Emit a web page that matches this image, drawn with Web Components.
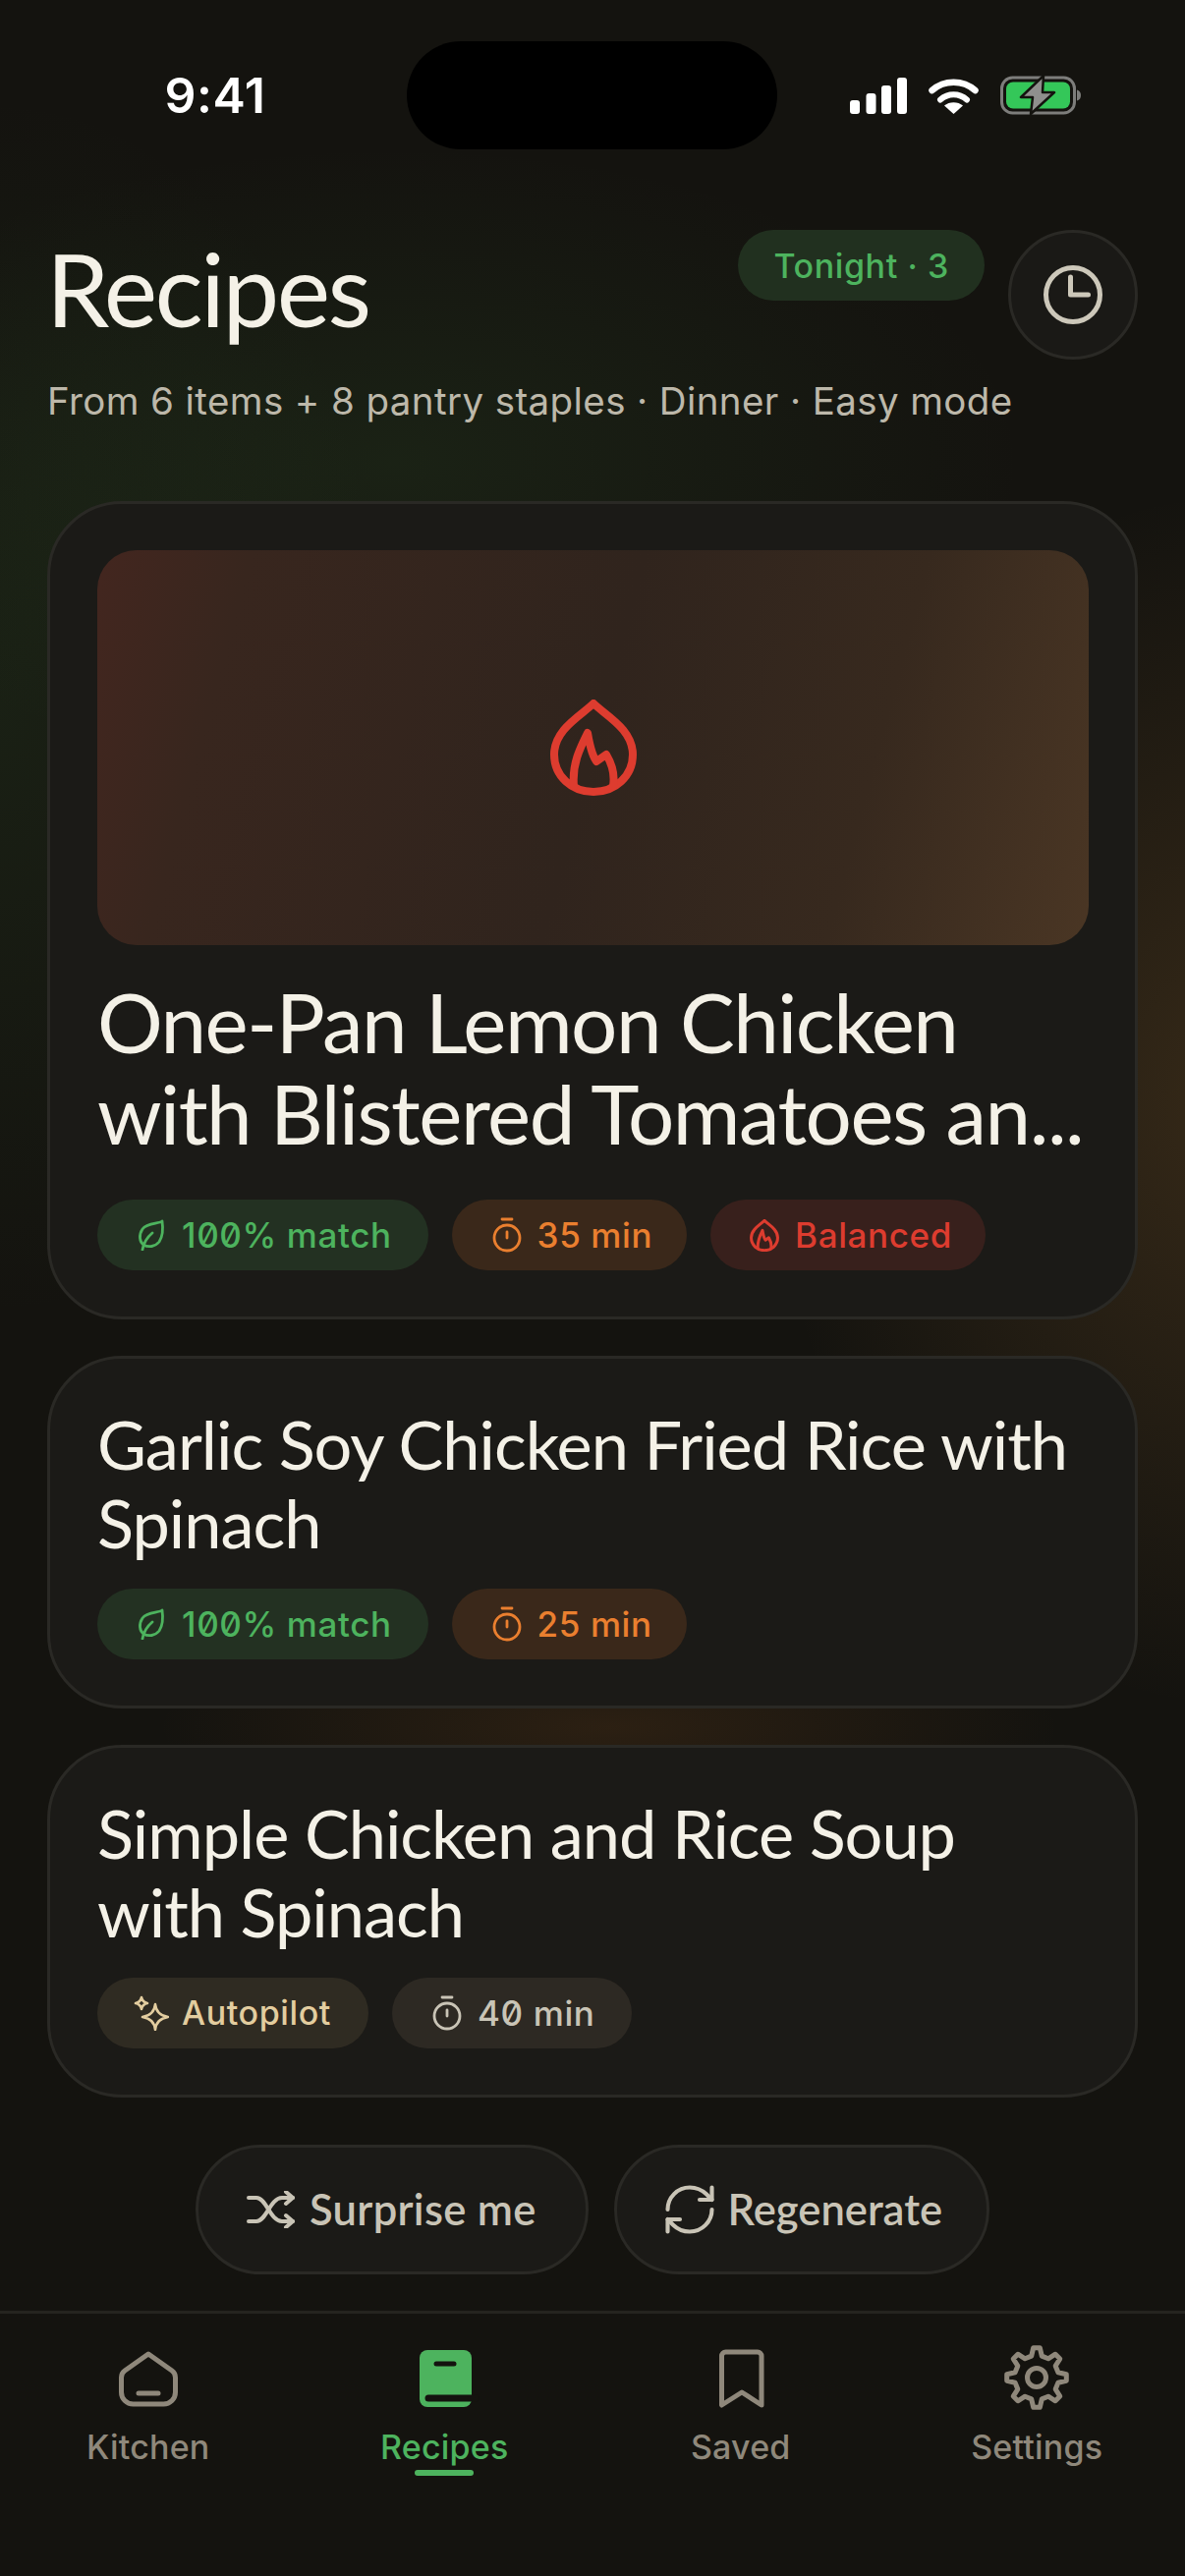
<!DOCTYPE html>
<html lang="en">
<head>
<meta charset="utf-8">
<title>Recipes</title>
<style>
  html, body { margin: 0; padding: 0; background: #14130f; }
  body { width: 1206px; height: 2622px; overflow: hidden; }
</style>
</head>
<body>
<app-shell>
  <status-bar></status-bar>
  <page-header heading="Recipes" sub="From 6 items + 8 pantry staples · Dinner · Easy mode" pill="Tonight · 3"></page-header>
  <card-list>
    <recipe-card hero size="large" heading="One-Pan Lemon Chicken with Blistered Tomatoes an...">
      <meta-chip tone="green" icon="leaf">100% match</meta-chip>
      <meta-chip tone="orange" icon="timer">35 min</meta-chip>
      <meta-chip tone="red" icon="flame">Balanced</meta-chip>
    </recipe-card>
    <recipe-card heading="Garlic Soy Chicken Fried Rice with Spinach">
      <meta-chip tone="green" icon="leaf">100% match</meta-chip>
      <meta-chip tone="orange" icon="timer">25 min</meta-chip>
    </recipe-card>
    <recipe-card heading="Simple Chicken and Rice Soup with Spinach">
      <meta-chip tone="cream" icon="sparkle">Autopilot</meta-chip>
      <meta-chip tone="grey" icon="timer">40 min</meta-chip>
    </recipe-card>
  </card-list>
  <action-row>
    <action-button icon="shuffle">Surprise me</action-button>
    <action-button icon="refresh">Regenerate</action-button>
  </action-row>
  <tab-bar>
    <tab-item icon="house">Kitchen</tab-item>
    <tab-item icon="book" active>Recipes</tab-item>
    <tab-item icon="bookmark">Saved</tab-item>
    <tab-item icon="gear">Settings</tab-item>
  </tab-bar>
</app-shell>

<script>
// 8 teeth gear, the lucide one only has 6
function gearPath(cx, cy, outer, inner) {
  const pts = [];
  const teeth = 8;
  for (let i = 0; i < teeth; i++) {
    const a = (i / teeth) * Math.PI * 2 - Math.PI / 2;
    const step = Math.PI * 2 / teeth;
    [[-0.30, inner], [-0.14, outer], [0.14, outer], [0.30, inner]].forEach(([off, r]) => {
      const t = a + off * step;
      pts.push((cx + Math.cos(t) * r).toFixed(1) + ' ' + (cy + Math.sin(t) * r).toFixed(1));
    });
  }
  return 'M' + pts.join(' L') + ' Z';
}

const FLAME_OUTER = 'M44 4C32 16 4 30 4 56c0 22 18 38 40 38s40-16 40-38C84 30 56 16 44 4Z';
const FLAME_INNER = 'M24 88C22 66 30 50 38 34c2 12 4 22 9 29l10-7c6 10 9 20 7 32';

const ICONS = {
  leaf: { w: 30, h: 32, box: '0 0 30 32', body: '<path d="M26 2C22 5 11 3 6 10c-4 6-3 13 1 16 5 3 12 2 16-3 4-6 4-14 3-21Z"/><path d="M6 31c1-6 4-12 10-17"/>', sw: 2.8 },
  timer: { w: 30, h: 36, box: '0 0 30 36', body: '<path d="M10 2h10"/><circle cx="15" cy="21" r="13"/><path d="M15 15v6"/>', sw: 2.8 },
  flame: { w: 30, h: 33, box: '0 0 88 98', body: `<path d="${FLAME_OUTER}"/><path d="${FLAME_INNER}"/>`, sw: 9 },
  sparkle: { w: 36, h: 36, box: '0 0 36 36', body: '<path d="M22 9q1 11 13 13-12 2-13 13-1-11-13-13 12-2 13-13Z"/><path d="M8 2q1 5 6 6-5 1-6 6-1-5-6-6 5-1 6-6Z"/>', sw: 2.6 },
  shuffle: { w: 50, h: 38, box: '0 0 50 38', body: '<path d="M2 7h8c10 0 14 24 26 24h11"/><path d="M2 31h8c10 0 14-24 26-24h11"/><path d="M40 1l7 6-7 6"/><path d="M40 25l7 6-7 6"/>', sw: 4 },
  refresh: { w: 60, h: 60, box: '0 0 24 24', body: '<path d="M3 12a9 9 0 0 1 9-9 9.75 9.75 0 0 1 6.74 2.74L21 8"/><path d="M21 3v5h-5"/><path d="M21 12a9 9 0 0 1-9 9 9.75 9.75 0 0 1-6.74-2.74L3 16"/><path d="M3 21v-5h5"/>', sw: 1.65 },
  clock: { w: 64, h: 64, box: '0 0 64 64', body: '<circle cx="32" cy="32" r="27.5"/><path d="M29.5 14v18h18"/>', sw: 5 },
  house: { w: 72, h: 72, box: '0 0 72 72', body: '<path d="M36 11 60 28q3.5 2.5 3.5 7v15a12 12 0 0 1-12 12h-31a12 12 0 0 1-12-12V35q0-4.500 3.500-7Z"/><path d="M26 51h20"/>', sw: 5 },
  book: { w: 72, h: 72, box: '0 0 72 72', body: '<rect x="11" y="7" width="53" height="58" rx="8" fill="currentColor" stroke="none"/><path d="M28 21h18" stroke="#14130f"/><path d="M20 56h48" stroke="#14130f" stroke-width="7"/>', sw: 5 },
  bookmark: { w: 72, h: 72, box: '0 0 72 72', body: '<path d="M16.500 63V13a4 4 0 0 1 4-4H53a4 4 0 0 1 4 4V63L37 50Z"/>', sw: 5 },
  gear: { w: 72, h: 72, box: '0 0 72 72', body: `<path d="${gearPath(36, 35, 30.5, 22.5)}"/><circle cx="36" cy="35" r="9.500"/>`, sw: 5 }
};

class AppIcon extends HTMLElement {
  connectedCallback() {
    const icon = ICONS[this.getAttribute('name')];
    this.attachShadow({ mode: 'open' }).innerHTML = `
      <style>
        :host { display: inline-flex; flex: none; line-height: 0; }
        svg { display: block; fill: none; stroke: currentColor; stroke-linecap: round; stroke-linejoin: round; }
      </style>
      <svg width="${icon.w}" height="${icon.h}" viewBox="${icon.box}" stroke-width="${icon.sw}">${icon.body}</svg>`;
  }
}
customElements.define('app-icon', AppIcon);

class AppShell extends HTMLElement {
  constructor() {
    super();
    this.attachShadow({ mode: 'open' }).innerHTML = `
      <style>
        :host {
          display: flex;
          flex-direction: column;
          width: 1206px;
          height: 2622px;
          overflow: hidden;
          font-family: Inter, "Liberation Sans", sans-serif;
          background:
            radial-gradient(ellipse 640px 320px at 400px 470px, rgba(64,120,56,.15), transparent 100%),
            radial-gradient(ellipse 400px 620px at 0px 720px, rgba(64,120,56,.13), transparent 100%),
            radial-gradient(ellipse 480px 620px at 1260px 1120px, rgba(190,130,60,.20), transparent 100%),
            radial-gradient(ellipse 460px 110px at 620px 1758px, rgba(190,110,40,.14), transparent 100%),
            #14130f;
        }
      </style>
      <slot></slot>`;
  }
}
customElements.define('app-shell', AppShell);

class StatusBar extends HTMLElement {
  constructor() {
    super();
    this.attachShadow({ mode: 'open' }).innerHTML = `
      <style>
        :host { display: flex; height: 152px; padding-top: 42px; box-sizing: border-box; align-items: flex-start; }
        .time { width: 414px; height: 110px; display: flex; align-items: center; justify-content: center; box-sizing: border-box; padding-left: 24px; color: #fff; font: 600 50px/1 Inter, sans-serif; letter-spacing: .5px; }
        .island { width: 377px; height: 110px; border-radius: 55px; background: #000; flex: none; }
        .right { flex: 1; height: 110px; display: flex; align-items: center; gap: 22px; padding-left: 74px; box-sizing: border-box; }
        svg { display: block; flex: none; }
      </style>
      <div class="time">9:41</div>
      <div class="island"></div>
      <div class="right">
        <svg width="58" height="37" viewBox="0 0 58 37" fill="#fff">
          <rect x="0" y="23" width="10" height="14" rx="3"/>
          <rect x="16.500" y="16" width="10" height="21" rx="3"/>
          <rect x="32" y="8" width="10" height="29" rx="3"/>
          <rect x="48" y="0" width="10" height="37" rx="3"/>
        </svg>
        <svg width="51" height="37" viewBox="0 0 51 37">
          <path d="M3.500 13C16 2 35 2 47.500 13" fill="none" stroke="#fff" stroke-width="6.500" stroke-linecap="round"/>
          <path d="M12 22.500c8-7 19-7 27 0" fill="none" stroke="#fff" stroke-width="6" stroke-linecap="round"/>
          <path d="M25.500 37 16 28.500c5-4.500 14-4.500 19 0Z" fill="#fff"/>
        </svg>
        <svg width="82" height="40" viewBox="0 0 82 40">
          <rect x="1.500" y="2" width="74" height="36" rx="11" fill="none" stroke="#7d7d7b" stroke-width="3"/>
          <rect x="6" y="6.500" width="65" height="27" rx="7" fill="#34c759"/>
          <path d="M78 14.500q4 1 4 5.500t-4 5.500Z" fill="#7d7d7b"/>
          <path d="M44 0 21 22h12l-2 17 24-22H43Z" fill="#8f8f8d" stroke="#14130f" stroke-width="2.500" stroke-linejoin="round"/>
        </svg>
      </div>`;
  }
}
customElements.define('status-bar', StatusBar);

class PageHeader extends HTMLElement {
  connectedCallback() {
    this.attachShadow({ mode: 'open' }).innerHTML = `
      <style>
        :host { display: block; padding: 82px 48px 0 48px; }
        .top { display: flex; align-items: flex-start; height: 130px; }
        h1 { margin: 0 0 0 -1px; flex: 1; font: 400 103px/118px Lato, sans-serif; letter-spacing: -2.5px; color: #f4f1e7; }
        .pill { height: 72px; padding: 0 36px; border-radius: 36px; background: #21301f; color: #4db35e; font: 500 34px/74px Inter, sans-serif; letter-spacing: .6px; margin-right: 24px; }
        .clock { width: 132px; height: 132px; box-sizing: border-box; border-radius: 50%; border: 3px solid #2a2925; background: #1a1916; color: #cdc8ba; display: flex; align-items: center; justify-content: center; }
        p { margin: 16px 0 0; font: 400 38.5px/56px Inter, sans-serif; letter-spacing: .4px; color: #bdb8aa; white-space: nowrap; }
      </style>
      <div class="top">
        <h1>${this.getAttribute('heading')}</h1>
        <div class="pill">${this.getAttribute('pill')}</div>
        <div class="clock"><app-icon name="clock"></app-icon></div>
      </div>
      <p>${this.getAttribute('sub')}</p>`;
  }
}
customElements.define('page-header', PageHeader);

class CardList extends HTMLElement {
  constructor() {
    super();
    this.attachShadow({ mode: 'open' }).innerHTML = `
      <style>
        :host { display: flex; flex-direction: column; gap: 37px; padding: 0 48px; margin-top: 74px; }
      </style>
      <slot></slot>`;
  }
}
customElements.define('card-list', CardList);

class RecipeCard extends HTMLElement {
  connectedCallback() {
    const hero = this.hasAttribute('hero');
    this.attachShadow({ mode: 'open' }).innerHTML = `
      <style>
        :host { display: block; box-sizing: border-box; border: 3px solid #2a2925; border-radius: 76px; background: #1b1a17; padding: 47px 47px 47px 48px; }
        .hero { height: 402px; border-radius: 40px; margin-bottom: 32px; display: flex; align-items: center; justify-content: center; color: #dd3c2f;
          background: linear-gradient(105deg, #43261f 0%, #38261e 14%, #30241d 50%, #37291e 76%, #4a3624 100%); }
        h2 { margin: 0; font-family: Lato, sans-serif; font-weight: 400; color: #f4f1e7; }
        .large { font-size: 83.5px; line-height: 93px; letter-spacing: -1.5px; }
        .small { font-size: 68.5px; line-height: 80px; letter-spacing: -1px; }
        .chips { display: flex; gap: 24px; margin-top: ${hero ? 41 : 27}px; }
      </style>
      ${hero ? '<div class="hero"><svg width="88" height="98" viewBox="0 0 88 98" fill="none" stroke="currentColor" stroke-width="8" stroke-linecap="round" stroke-linejoin="round"><path d="' + FLAME_OUTER + '"/><path d="' + FLAME_INNER + '"/></svg></div>' : ''}
      <h2 class="${this.getAttribute('size') === 'large' ? 'large' : 'small'}">${this.getAttribute('heading')}</h2>
      <div class="chips"><slot></slot></div>`;
  }
}
customElements.define('recipe-card', RecipeCard);

const TONES = {
  green: ['#233122', '#4db35e'],
  orange: ['#3a281a', '#ea7f2f'],
  red: ['#38201c', '#dd3c2f'],
  cream: ['#2f2b22', '#e3cd9f'],
  grey: ['#2d2923', '#c9c4b6']
};

class MetaChip extends HTMLElement {
  connectedCallback() {
    const toneName = this.getAttribute('tone');
    const tone = TONES[toneName];
    const icon = this.getAttribute('icon');
    const spark = icon === 'sparkle';
    const padLeft = spark ? 37 : icon === 'timer' ? 41 : 40;
    const padRight = { red: 34, orange: 35, green: 37 }[toneName] || 38;
    this.attachShadow({ mode: 'open' }).innerHTML = `
      <style>
        :host { display: inline-flex; align-items: center; gap: ${spark ? 13 : 16}px; height: 72px; padding: 0 ${padRight}px 0 ${padLeft}px; border-radius: 36px; box-sizing: border-box;
          background: ${tone[0]}; color: ${tone[1]}; font: 500 ${spark ? 34 : 35}px/1 Inter, sans-serif; letter-spacing: .6px; font-feature-settings: "zero" 1; white-space: nowrap; }
      </style>
      <app-icon name="${icon}"></app-icon>
      <slot></slot>`;
  }
}
customElements.define('meta-chip', MetaChip);

class ActionRow extends HTMLElement {
  constructor() {
    super();
    this.attachShadow({ mode: 'open' }).innerHTML = `
      <style>
        :host { display: flex; justify-content: center; gap: 26px; margin-top: 48px; }
      </style>
      <slot></slot>`;
  }
}
customElements.define('action-row', ActionRow);

class ActionButton extends HTMLElement {
  connectedCallback() {
    const icon = this.getAttribute('icon');
    const spin = icon === 'refresh';
    this.attachShadow({ mode: 'open' }).innerHTML = `
      <style>
        :host { display: inline-flex; align-items: center; gap: ${spin ? 9 : 14}px; height: 132px; padding: 0 ${spin ? 45 : 50}px 0 ${spin ? 44 : 49}px; box-sizing: border-box; border-radius: 66px;
          border: 3px solid #2a2925; background: #1b1a17; color: #c9c4b6; font: 600 43.5px/1 Lato, sans-serif; letter-spacing: ${spin ? 0 : .3}px; white-space: nowrap; }
      </style>
      <app-icon name="${icon}"></app-icon>
      <slot></slot>`;
  }
}
customElements.define('action-button', ActionButton);

class TabBar extends HTMLElement {
  constructor() {
    super();
    this.attachShadow({ mode: 'open' }).innerHTML = `
      <style>
        :host { display: grid; grid-template-columns: repeat(4, 1fr); margin-top: 37px; padding-top: 30px; border-top: 3px solid #25241f; background: #14130f; flex: 1; }
      </style>
      <slot></slot>`;
  }
}
customElements.define('tab-bar', TabBar);

class TabItem extends HTMLElement {
  connectedCallback() {
    const active = this.hasAttribute('active');
    this.attachShadow({ mode: 'open' }).innerHTML = `
      <style>
        :host { display: flex; flex-direction: column; align-items: center; color: ${active ? '#4db35e' : '#8f887b'}; font: 500 34px/44px Inter, sans-serif; letter-spacing: .2px; }
        .label { margin-top: 12px; }
        .bar { width: 60px; height: 6px; border-radius: 3px; margin-top: 1px; background: ${active ? '#4db35e' : 'transparent'}; }
      </style>
      <app-icon name="${this.getAttribute('icon')}"></app-icon>
      <div class="label"><slot></slot></div>
      <div class="bar"></div>`;
  }
}
customElements.define('tab-item', TabItem);
</script>
</body>
</html>
